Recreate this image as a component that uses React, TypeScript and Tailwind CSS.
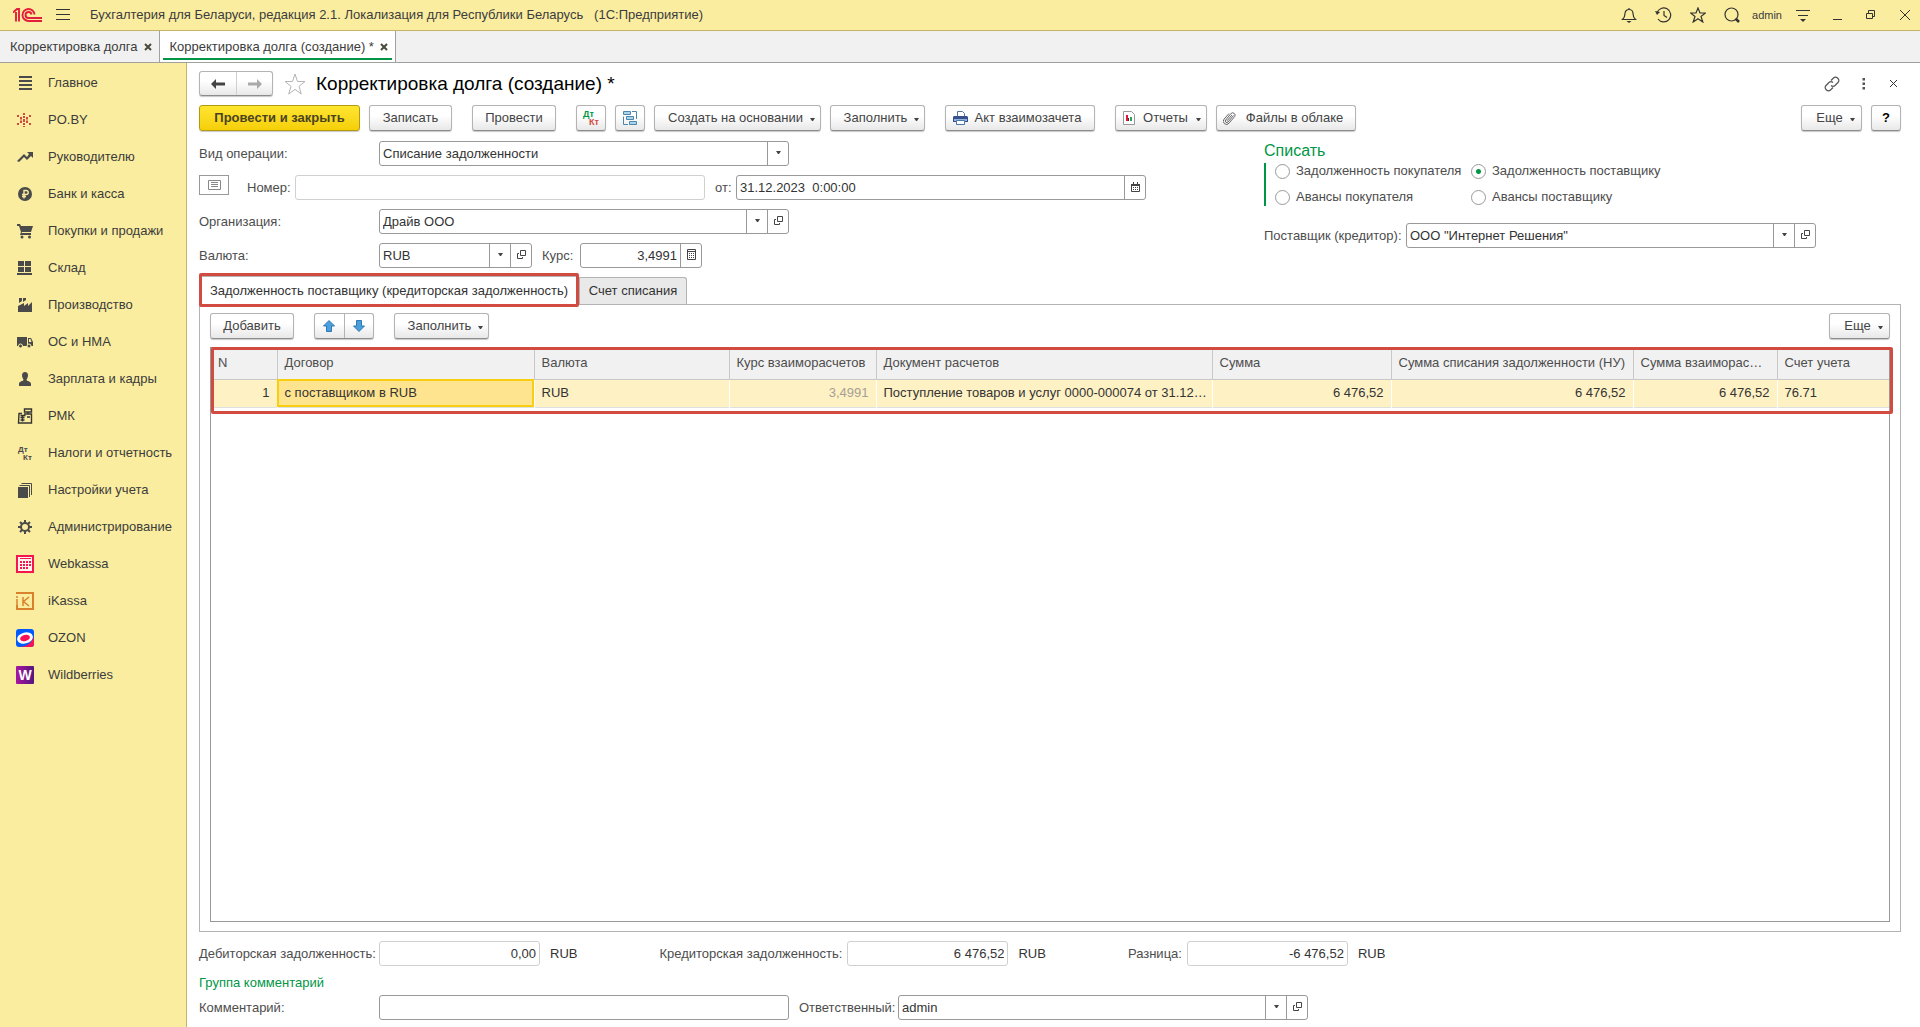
import { useState, type ReactNode } from "react";

type MenuItem = {
  title: string;
  icon: ReactNode;
};

type Column = {
  title: string;
  value: string;
  width: string;
  right?: boolean;
};

const menu: MenuItem[] = [
  {
    title: "Главное",
    icon: <path d="M2 1h13v2H2zM2 5h13v2H2zM2 9h13v2H2zM2 13h13v2H2z" />,
  },
  {
    title: "PO.BY",
    icon: (
      <path
        fill="#cf4a3f"
        d="M6 1h2v2H6zM6 4h2v2H6zM6 7h2v3H6zM6 11h2v2H6zM6 14h2v1H6zM3 5h2v2H3zM9 5h2v2H9zM3 9h2v2H3zM9 9h2v2H9zM0 3h2v2H0zM0 11h2v2H0zM12 3h2v2h-2zM12 11h2v2h-2zM3 7.500h2v1H3zM9 7.500h2v1H9z"
      />
    ),
  },
  {
    title: "Руководителю",
    icon: <path d="M10 3h6v6l-2-2-4 4-3-3-5 5-2-1 7-7 3 3 2-3z" />,
  },
  {
    title: "Банк и касса",
    icon: (
      <>
        <circle cx="8" cy="8" r="7" />
        <path fill="none" stroke="#faed9f" strokeWidth="1.400" d="M7 12.500V4.500h2.200a2 2 0 0 1 0 4H5M5 10.500h4" />
      </>
    ),
  },
  {
    title: "Покупки и продажи",
    icon: (
      <>
        <path d="M0 1h3l1 2h12l-2 6H5l-.5 1H14v2H3l1-3-2-6H0z" />
        <circle cx="5" cy="14" r="1.500" />
        <circle cx="12.500" cy="14" r="1.500" />
      </>
    ),
  },
  {
    title: "Склад",
    icon: <path d="M1 1h6v5H1zM8 1h6v5H8zM1 7h6v5H1zM8 7h6v5H8zM0 13h15v2H0z" />,
  },
  {
    title: "Производство",
    icon: <path d="M1 15V9l6-3v3l4-3v3l4-4v10zM2 1h3v3L2 6zM6 1h3v2L6 5z" />,
  },
  {
    title: "ОС и НМА",
    icon: (
      <>
        <path d="M0 3h10v9H0zM11 4h3l2 4v4h-5z" />
        <path fill="#faed9f" d="M12 5h1.500l1 3H12z" />
        <g stroke="#faed9f">
          <circle cx="3.500" cy="12" r="2" />
          <circle cx="12" cy="12" r="2" />
        </g>
      </>
    ),
  },
  {
    title: "Зарплата и кадры",
    icon: <path d="M8 1c2 0 3 1.500 3 3.500S9.500 8.500 9.500 9c0 1 4.500 1 4.500 4v2H2v-2c0-3 4.500-3 4.500-4 0-.5-1.500-2.500-1.500-4.500S6 1 8 1z" />,
  },
  {
    title: "РМК",
    icon: (
      <g fill="none" stroke="#333" strokeWidth="1.400">
        <path d="M7.500 1h7v3h-7zM11 4v2M5 5.500H2L1.500 15h13V6H7" />
        <path d="M3.500 7.500h5M3.500 9.500h4M3.500 12h4M5.500 7.500v6M10 9h3" />
      </g>
    ),
  },
  {
    title: "Налоги и отчетность",
    icon: (
      <g fontFamily="Liberation Sans, sans-serif" fontWeight="700" fontSize="8">
        <text x="1" y="7">Дт</text>
        <text x="6" y="15">Кт</text>
      </g>
    ),
  },
  {
    title: "Настройки учета",
    icon: (
      <>
        <path d="M1 5h10v11H1z" />
        <path fill="none" stroke="#4a4a4a" d="M2.500 3.500h10V15M4.500 1.500h10V13" />
      </>
    ),
  },
  {
    title: "Администрирование",
    icon: (
      <>
        <circle cx="8" cy="8" r="4" fill="none" stroke="#4a4a4a" strokeWidth="2" />
        <path
          stroke="#4a4a4a"
          strokeWidth="2"
          d="M8 1v3M8 12v3M1 8h3M12 8h3M3 3l2 2M11 11l2 2M13 3l-2 2M5 11l-2 2"
        />
      </>
    ),
  },
  {
    title: "Webkassa",
    icon: (
      <>
        <path fill="#fff4ee" stroke="#f5174b" strokeWidth="2" d="M0 0h16v16H0z" />
        <path
          fill="#f5174b"
          d="M3 2h11v1H3zM3 5h2v2H3zM6 5h2v2H6zM9 5h2v2H9zM12 5h2v2h-2zM3 8h2v2H3zM6 8h2v2H6zM9 8h2v2H9zM12 8h2v2h-2zM3 11h2v2H3zM6 11h2v2H6zM9 11h2v2H9z"
        />
      </>
    ),
  },
  {
    title: "iKassa",
    icon: (
      <g fill="none" stroke="#d9822b" strokeWidth="1.500">
        <path d="M0 1V0h16v16H0v-4" strokeWidth="2" />
        <path d="M0 3v2M0 6v6M6 4v9M12 4l-5.500 4.500L12 13" />
      </g>
    ),
  },
  {
    title: "OZON",
    icon: (
      <>
        <rect x="-1" y="-1" width="18" height="18" rx="3" fill="#005bff" />
        <path fill="#f91155" d="M17 7v7a3 3 0 0 1-3 3H2c6 0 12-3 15-10z" />
        <ellipse cx="8" cy="8" rx="8" ry="5.500" fill="#fff" transform="rotate(-14 8 8)" />
        <ellipse cx="8" cy="8" rx="5" ry="3" fill="#f91155" transform="rotate(-14 8 8)" />
      </>
    ),
  },
  {
    title: "Wildberries",
    icon: (
      <>
        <linearGradient id="wb" x1="0" y1="0" x2="1" y2="0">
          <stop offset="0" stopColor="#a915a0" />
          <stop offset="1" stopColor="#54167f" />
        </linearGradient>
        <rect x="-1" y="-1" width="18" height="18" rx="1" fill="url(#wb)" />
        <text x="8" y="13" textAnchor="middle" fill="#fff" fontFamily="Liberation Sans, sans-serif" fontWeight="700" fontSize="14">
          W
        </text>
      </>
    ),
  },
];

const columns: Column[] = [
  { title: "N", value: "1", width: "w-[66px]", right: true },
  { title: "Договор", value: "с поставщиком в RUB", width: "w-[257px]" },
  { title: "Валюта", value: "RUB", width: "w-[195px]" },
  { title: "Курс взаиморасчетов", value: "3,4991", width: "w-[147px]", right: true },
  { title: "Документ расчетов", value: "Поступление товаров и услуг 0000-000074 от 31.12…", width: "w-[336px]" },
  { title: "Сумма", value: "6 476,52", width: "w-[179px]", right: true },
  { title: "Сумма списания задолженности (НУ)", value: "6 476,52", width: "w-[242px]", right: true },
  { title: "Сумма взаиморас…", value: "6 476,52", width: "w-[144px]", right: true },
  { title: "Счет учета", value: "76.71", width: "" },
];

const debtKinds = [
  "Задолженность покупателя",
  "Задолженность поставщику",
  "Авансы покупателя",
  "Авансы поставщику",
];

const btn =
  "flex h-[26px] shrink-0 items-center justify-center rounded-[3px] border border-[#b3b3b3] border-b-[#8c8c8c] bg-linear-to-b from-white from-40% to-[#e8e8e8] whitespace-nowrap text-[#444] shadow-[0_1px_1px_#c8c8c8]";
const field = "flex h-[25px] rounded-[3px] border border-[#999] bg-white";
const control = "min-w-0 flex-1 bg-transparent px-[3px] text-[#333] outline-none";

function Caret() {
  return (
    <svg width="5" height="3" viewBox="0 0 5 3" fill="#444" className="mt-0.5" aria-hidden="true">
      <path d="M0 0h5L3 3H2z" />
    </svg>
  );
}

function FieldButton({ kind }: { kind: "list" | "open" | "date" | "calc" }) {
  const labels = { list: "Выбрать", open: "Открыть", date: "Календарь", calc: "Калькулятор" };
  return (
    <button type="button" aria-label={labels[kind]} className="flex w-[21px] shrink-0 items-center justify-center border-l border-[#999] pb-0.5">
      {kind === "list" && (
        <svg width="5" height="3" viewBox="0 0 5 3" fill="#444">
          <path d="M0 0h5L3 3H2z" />
        </svg>
      )}
      {kind === "open" && (
        <svg width="9" height="9" viewBox="0 0 9 9" fill="none" stroke="#444">
          <path d="M3.500.5h5v5h-5zM2 3.500H.5v5h5V7" />
        </svg>
      )}
      {kind === "date" && (
        <svg width="9" height="10" viewBox="0 0 9 10" fill="none" stroke="#444">
          <path d="M.5 2.500h8v7h-8zM0 2.500h9M2.500 0v2M6.500 0v2" />
          <path d="M0 3.500h9" />
          <path strokeDasharray="1 1" d="M2 5.500h5M2 7.500h5" />
        </svg>
      )}
      {kind === "calc" && (
        <svg width="9" height="11" viewBox="0 0 9 11" fill="none" stroke="#444">
          <path d="M.5.5h8v10h-8zM1 2.500h7" />
          <path strokeDasharray="1 1" d="M2 4.500h5M2 6.500h5M2 8.500h5" />
        </svg>
      )}
    </button>
  );
}

function Total({ id, label, value, labelWidth }: { id: string; label: string; value: string; labelWidth: string }) {
  return (
    <div className="flex items-center">
      <label htmlFor={id} className={labelWidth}>{label}</label>
      <div className="flex h-[25px] w-[161px] rounded-[3px] border border-[#d0d0d0]">
        <input id={id} readOnly className={control + " text-right"} defaultValue={value} />
      </div>
      <span className="ml-[10px] text-[#333]">RUB</span>
    </div>
  );
}

function TopBar() {
  return (
    <header className="flex h-[31px] items-center border-b border-[#c5b565] bg-[#faed9f] pr-2.5 pl-[13px] text-[#3c3c3c]">
      <svg width="29" height="14" viewBox="0 0 29 14" fill="none" stroke="#e31e3c" strokeWidth="1.900" aria-label="1С">
        <path d="M0 4.500 4 1h2v12.500M3 4v9.500" />
        <path d="M21.500 6.500A6 6 0 1 0 15.500 13H29" />
        <path d="M18.500 6.500A3 3 0 1 0 15.500 10H29" />
      </svg>
      <button type="button" aria-label="Меню" className="ml-3.5">
        <svg width="14" height="12" viewBox="0 0 14 12" stroke="#333">
          <path d="M0 .5h14M0 5.500h14M0 10.500h14" />
        </svg>
      </button>
      <h1 className="ml-5 whitespace-pre">
        Бухгалтерия для Беларуси, редакция 2.1. Локализация для Республики Беларусь   (1С:Предприятие)
      </h1>
      <div className="ml-auto flex items-center">
        <button type="button" aria-label="Уведомления" className="mr-[18px]">
          <svg width="16" height="16" viewBox="0 0 16 16" fill="none" stroke="#333" strokeWidth="1.200">
            <path d="M1.500 12.500c2-2 2.500-3 2.500-6 0-2 1.500-4 4-4s4 2 4 4c0 3 .5 4 2.500 6zM8 1v1.500" />
            <path fill="#333" stroke="none" d="M5.500 14h5L8 16z" />
          </svg>
        </button>
        <button type="button" aria-label="История" className="mr-[18px]">
          <svg width="17" height="16" viewBox="0 0 17 16" fill="none" stroke="#333" strokeWidth="1.200">
            <path d="M2 6a7 7 0 1 1 1 6M9 4v4.500l3 2" />
            <path fill="#333" stroke="none" d="m0 4 5 1-3 3z" />
          </svg>
        </button>
        <button type="button" aria-label="Избранное" className="mr-[18px]">
          <svg width="16" height="16" viewBox="0 0 16 16" fill="none" stroke="#333" strokeWidth="1.200">
            <path d="m8 1 2 5h5.500L11 9.500l1.800 5.500L8 11.800 3.200 15 5 9.500.5 6H6z" />
          </svg>
        </button>
        <button type="button" aria-label="Поиск" className="mr-3">
          <svg width="16" height="16" viewBox="0 0 16 16" fill="none" stroke="#333" strokeWidth="1.200">
            <circle cx="7.500" cy="7.500" r="6.500" />
            <path strokeWidth="2.500" d="m11.500 11.500 3.500 3.500" />
          </svg>
        </button>
        <span className="text-[11px]">admin</span>
        <button type="button" aria-label="Настройки" className="mr-[23px] ml-3.5">
          <svg width="14" height="14" viewBox="0 0 14 14" stroke="#333">
            <path d="M0 2.500h14M2 7.500h10" />
            <path fill="#333" stroke="none" d="M4 11h6l-3 3z" />
          </svg>
        </button>
        <button type="button" aria-label="Свернуть" className="mr-6">
          <svg width="9" height="10" viewBox="0 0 9 10" stroke="#333">
            <path d="M0 9.500h9" />
          </svg>
        </button>
        <button type="button" aria-label="Развернуть" className="mr-6">
          <svg width="10" height="10" viewBox="0 0 10 10" fill="none" stroke="#333">
            <path d="M.5 3.500h6v5h-6zM2.500 3V.5h6v6H7" />
          </svg>
        </button>
        <button type="button" aria-label="Закрыть">
          <svg width="10" height="10" viewBox="0 0 10 10" stroke="#333">
            <path d="m0 0 10 10M10 0 0 10" />
          </svg>
        </button>
      </div>
    </header>
  );
}

function CloseMark() {
  return (
    <svg width="8" height="8" viewBox="0 0 8 8" stroke="#4a4a3c" strokeWidth="2" aria-label="Закрыть">
      <path d="m1 1 6 6M7 1 1 7" />
    </svg>
  );
}

export default function App() {
  const [kind, setKind] = useState("Задолженность поставщику");

  return (
    <div className="flex min-h-screen flex-col bg-white font-['Liberation_Sans',Arial,sans-serif] text-[13px] leading-4 text-[#4d4d4d]">
      <TopBar />

      {/* open windows */}
      <nav className="flex h-8 border-b border-[#a0a0a0] bg-[#f1f1f1] text-[#3c3c3c]">
        <a href="#list" className="flex items-center gap-1.5 border-r border-[#a0a0a0] pr-[7px] pl-2.5">
          Корректировка долга
          <CloseMark />
        </a>
        <a href="#new" className="flex items-stretch border-r border-[#a0a0a0] bg-white px-[3px] pb-0.5">
          <span className="flex items-center gap-1.5 border-b-2 border-[#009646] pt-1 pr-1 pl-[7px]">
            Корректировка долга (создание) *
            <CloseMark />
          </span>
        </a>
      </nav>

      <div className="flex flex-1">
        <aside className="w-[187px] shrink-0 border-r border-[#c5b565] bg-[#faed9f] pt-px">
          {menu.map((item) => (
            <a key={item.title} href="#" className="flex h-[37px] items-center gap-3.5 pl-4 whitespace-nowrap text-[#3c3c3c]">
              <svg width="18" height="18" viewBox="-1 -1 18 18" fill="#4a4a4a" className="shrink-0" aria-hidden="true">
                {item.icon}
              </svg>
              {item.title}
            </a>
          ))}
        </aside>

        <main className="flex min-w-0 flex-1 flex-col pt-2 pr-[19px] pb-[7px] pl-3">
          <div className="flex h-[25px] items-center">
            <div className="flex h-[25px] rounded-[3px] border border-[#b3b3b3] border-b-[#8c8c8c] bg-linear-to-b from-white from-40% to-[#e8e8e8] shadow-[0_1px_1px_#c8c8c8]">
              <button type="button" aria-label="Назад" className="flex w-9 items-center justify-center">
                <svg width="14" height="10" viewBox="0 0 14 10" fill="#444">
                  <path d="m0 5 5-5v3.500h9v3H5V10z" />
                </svg>
              </button>
              <button type="button" aria-label="Вперед" className="flex w-9 items-center justify-center border-l border-[#d0d0d0]">
                <svg width="14" height="10" viewBox="0 0 14 10" fill="#aaa">
                  <path d="m14 5-5-5v3.500H0v3h9V10z" />
                </svg>
              </button>
            </div>
            <button type="button" aria-label="В избранное" className="ml-[11px]">
              <svg width="22" height="22" viewBox="0 0 22 22" fill="none" stroke="#b5b5b5">
                <path d="m11 1 2.500 7.500H21l-6 4.800 2.300 7.700L11 16.400 4.700 21 7 13.300 1 8.500h7.500z" />
              </svg>
            </button>
            <h2 className="ml-[10px] text-[19px] leading-6 text-black">Корректировка долга (создание) *</h2>
            <div className="mr-1 ml-auto flex items-center gap-5">
              <button type="button" aria-label="Ссылка">
                <svg width="16" height="16" viewBox="0 0 16 16" fill="none" stroke="#555" strokeWidth="1.200">
                  <path d="M7 4.500 9.500 2a2.800 2.800 0 0 1 4 0l.5.500a2.800 2.800 0 0 1 0 4L11 9.500a2.800 2.800 0 0 1-4 0" />
                  <path d="M9 11.500 6.500 14a2.800 2.800 0 0 1-4 0L2 13.500a2.800 2.800 0 0 1 0-4L5 6.500a2.800 2.800 0 0 1 4 0" />
                </svg>
              </button>
              <button type="button" aria-label="Действия" className="mx-0.5">
                <svg width="4" height="12" viewBox="0 0 4 12" fill="#555">
                  <path d="M.5 0h2.500v2.500H.5zM.5 4.500h2.500V7H.5zM.5 9h2.500v2.500H.5z" />
                </svg>
              </button>
              <button type="button" aria-label="Закрыть форму" className="ml-0.5">
                <svg width="7" height="7" viewBox="0 0 7 7" stroke="#333">
                  <path d="m0 0 7 7M7 0 0 7" />
                </svg>
              </button>
            </div>
          </div>

          {/* form commands */}
          <div className="mt-[9px] flex">
            <button type="button" className="flex h-[26px] w-[161px] items-center justify-center rounded-[3px] border border-[#b39b10] bg-linear-to-b from-[#ffe62e] to-[#f5cf05] font-bold text-[#4a4320] shadow-[0_1px_1px_#c8c8c8]">
              Провести и закрыть
            </button>
            <button type="button" className={btn + " ml-[9px] w-[83px]"}>Записать</button>
            <button type="button" className={btn + " ml-5 w-[84px]"}>Провести</button>
            <button type="button" aria-label="Дт Кт" className={btn + " ml-5 w-[30px]"}>
              <svg width="18" height="18" viewBox="0 0 18 18" fontFamily="Liberation Sans, sans-serif" fontWeight="700" fontSize="9">
                <text x="1" y="8" fill="#009646">Дт</text>
                <text x="7" y="16" fill="#d24b40">Кт</text>
              </svg>
            </button>
            <button type="button" aria-label="Структура подчиненности" className={btn + " ml-[9px] w-[30px]"}>
              <svg width="14" height="14" viewBox="0 0 14 14" fill="#a9d4ec" stroke="#4d86ad">
                <path d="M.5.5h7v3h-7zM3.500 5.500h7v3h-7zM6.500 10.500h7v3h-7z" />
                <path fill="none" d="M9 .5h4.500V8M.5 5.500v8H5" />
              </svg>
            </button>
            <button type="button" className={btn + " ml-[9px] w-[167px] gap-[7px] pl-2"}>
              Создать на основании <Caret />
            </button>
            <button type="button" className={btn + " ml-[9px] w-[95px] gap-[7px] pl-2"}>
              Заполнить <Caret />
            </button>
            <button type="button" className={btn + " ml-5 w-[150px] gap-[7px] pr-1.5"}>
              <svg width="15" height="14" viewBox="0 0 15 14">
                <path fill="#fff" stroke="#4a78a8" d="M4.500 5V.5h5l2 2V5" />
                <path fill="#39508f" d="M1 5h13l1 1v5H0V6z" />
                <path fill="#8fb4dc" d="M1 8h13v2H1z" />
                <path fill="#fff" stroke="#4a78a8" d="M3.500 9.500h8v4h-8z" />
              </svg>
              Акт взаимозачета
            </button>
            <button type="button" className={btn + " ml-5 w-[92px] gap-2 pl-0.5"}>
              <svg width="12" height="14" viewBox="0 0 12 14">
                <path fill="#fff" stroke="#999" d="M.5.5h8l3 3v10H.5z" />
                <path fill="#e3173e" d="M3 4h2v6H3z" />
                <path fill="#333" d="M5 7h1v3H5z" />
                <path fill="#2e9e4f" d="M7 6h2v4H7z" />
              </svg>
              Отчеты <Caret />
            </button>
            <button type="button" className={btn + " ml-[9px] w-[140px] gap-2.5 pr-1.5"}>
              <svg width="13" height="14" viewBox="0 0 13 14" fill="none" stroke="#666">
                <path d="M10.500 4.500 5 11a1.500 1.500 0 0 1-2.300-2L8 2.500a2.400 2.400 0 0 1 3.700 3L6 12.200a3.200 3.200 0 0 1-5-4L6 2.500M9 4 4 9.800" />
              </svg>
              Файлы в облаке
            </button>
            <button type="button" className={btn + " ml-auto w-[61px] gap-[7px] pl-2"}>
              Еще <Caret />
            </button>
            <button type="button" className={btn + " ml-[9px] w-[30px] font-bold text-black"}>?</button>
          </div>

          {/* document header */}
          <div className="mt-[10px] flex">
            <div className="flex w-[1065px] shrink-0 flex-col gap-[9px]">
              <div className="flex items-center">
                <label htmlFor="operation" className="w-[180px]">Вид операции:</label>
                <div className={field + " w-[410px]"}>
                  <select id="operation" className={control + " appearance-none"}>
                    <option>Списание задолженности</option>
                  </select>
                  <FieldButton kind="list" />
                </div>
              </div>
              <div className="flex h-[25px] items-center">
                <button type="button" aria-label="Изменить номер" className="flex h-5 w-[30px] items-center justify-center self-start border border-[#999]">
                  <svg width="13" height="10" viewBox="0 0 13 10" fill="none" stroke="#888">
                    <path d="M.5.5h12v9H.5zM3 2.500h7M3 4.500h7M3 6.500h7" />
                  </svg>
                </button>
                <label htmlFor="number" className="ml-[18px] w-12">Номер:</label>
                <div className="flex h-[25px] w-[410px] rounded-[3px] border border-[#d0d0d0]">
                  <input id="number" className={control} />
                </div>
                <label htmlFor="date" className="ml-[10px] w-[21px]">от:</label>
                <div className={field + " w-[410px]"}>
                  <input id="date" className={control} defaultValue="31.12.2023  0:00:00" />
                  <FieldButton kind="date" />
                </div>
              </div>
              <div className="flex items-center">
                <label htmlFor="org" className="w-[180px]">Организация:</label>
                <div className={field + " w-[410px]"}>
                  <input id="org" className={control} defaultValue="Драйв ООО" />
                  <FieldButton kind="list" />
                  <FieldButton kind="open" />
                </div>
              </div>
              <div className="flex items-center">
                <label htmlFor="currency" className="w-[180px]">Валюта:</label>
                <div className={field + " w-[153px]"}>
                  <input id="currency" className={control} defaultValue="RUB" />
                  <FieldButton kind="list" />
                  <FieldButton kind="open" />
                </div>
                <label htmlFor="rate" className="ml-[10px] w-[38px]">Курс:</label>
                <div className={field + " w-[122px]"}>
                  <input id="rate" className={control + " text-right"} defaultValue="3,4991" />
                  <FieldButton kind="calc" />
                </div>
              </div>
            </div>

            <div>
              <fieldset>
                <legend className="text-base leading-5 text-[#009646]">Списать</legend>
                <div className="mt-0.5 grid grid-cols-[196px_auto] gap-y-[10px] border-l-2 border-[#009646] pb-px pl-[9px]">
                  {debtKinds.map((name) => (
                    <label key={name} className="flex items-center gap-1.5 whitespace-nowrap">
                      <input
                        type="radio"
                        name="debt"
                        checked={kind === name}
                        onChange={() => setKind(name)}
                        className="size-[15px] appearance-none rounded-full border border-[#999] bg-white checked:bg-[radial-gradient(circle,#009646_2px,white_3px)]"
                      />
                      {name}
                    </label>
                  ))}
                </div>
              </fieldset>
              <div className="mt-[17px] flex items-center">
                <label htmlFor="supplier" className="w-[142px] whitespace-nowrap">Поставщик (кредитор):</label>
                <div className={field + " w-[410px]"}>
                  <input id="supplier" className={control} defaultValue={'ООО "Интернет Решения"'} />
                  <FieldButton kind="list" />
                  <FieldButton kind="open" />
                </div>
              </div>
            </div>
          </div>

          {/* tabs */}
          <div className="mt-2 flex items-end text-[#333]">
            <button type="button" className="relative z-10 -mb-px h-[29px] w-[380px] border border-b-0 border-[#b3b3b3] bg-white">
              Задолженность поставщику (кредиторская задолженность)
              <span className="absolute -inset-x-px -top-1 -bottom-0.5 rounded-xs border-3 border-[#d24b40]" />
            </button>
            <button type="button" className="h-[27px] w-[108px] rounded-tr-[3px] border border-b-0 border-[#b3b3b3] bg-[#e9e9e9]">
              Счет списания
            </button>
          </div>

          <section className="flex flex-1 flex-col border border-[#b3b3b3] px-[10px] pt-2 pb-[9px]">
            <div className="flex">
              <button type="button" className={btn + " w-[84px]"}>Добавить</button>
              <div className={btn + " ml-5 w-[60px]"}>
                <button type="button" aria-label="Вверх" className="flex h-full flex-1 items-center justify-center">
                  <svg width="12" height="12" viewBox="0 0 12 12" fill="#4a9fdc" stroke="#2f78b0">
                    <path d="m6 .5 5.500 5.500H8.500v5.500h-5V6H.5z" />
                  </svg>
                </button>
                <button type="button" aria-label="Вниз" className="flex h-full flex-1 items-center justify-center border-l border-[#b3b3b3]">
                  <svg width="12" height="12" viewBox="0 0 12 12" fill="#4a9fdc" stroke="#2f78b0">
                    <path d="M6 11.500.5 6h3V.5h5V6h3z" />
                  </svg>
                </button>
              </div>
              <button type="button" className={btn + " ml-5 w-[95px] gap-[7px] pl-2"}>
                Заполнить <Caret />
              </button>
              <button type="button" className={btn + " ml-auto w-[61px] gap-[7px] pl-2"}>
                Еще <Caret />
              </button>
            </div>

            <div className="relative mt-2 flex-1 border border-[#999]">
              <table className="w-full table-fixed border-collapse">
                <thead>
                  <tr className="h-[31px] bg-[#f1f1f1]">
                    {columns.map((col) => (
                      <th
                        key={col.title}
                        className={"border-r border-b border-[#c8c8c8] px-[7px] text-left font-normal whitespace-nowrap last:border-r-0 " + col.width}
                      >
                        {col.title}
                      </th>
                    ))}
                  </tr>
                </thead>
                <tbody>
                  <tr className="h-[28px] border-b border-[#e0e0e0] bg-[#fef1c4] text-[#333]">
                    {columns.map((col, i) => (
                      <td
                        key={col.title}
                        className={
                          "border-r border-white px-[7px] whitespace-nowrap last:border-r-0" +
                          (col.right ? " text-right" : "") +
                          (i === 1 ? " bg-[#ffe48f] outline-2 -outline-offset-2 outline-[#f8cf10]" : "") +
                          (i === 3 ? " text-[#a5a094]" : "")
                        }
                      >
                        {col.value}
                      </td>
                    ))}
                  </tr>
                </tbody>
              </table>
              <div className="pointer-events-none absolute -top-px -right-1 left-0 h-[67px] rounded-xs border-3 border-[#d24b40]" />
            </div>
          </section>

          <div className="mt-[9px] flex">
            <Total id="debit" label="Дебиторская задолженность:" value="0,00" labelWidth="w-[180px]" />
            <div className="ml-[82px]">
              <Total id="credit" label="Кредиторская задолженность:" value="6 476,52" labelWidth="w-[188px]" />
            </div>
            <div className="ml-[82px]">
              <Total id="diff" label="Разница:" value="-6 476,52" labelWidth="w-[59px]" />
            </div>
          </div>

          <h3 className="mt-[9px] text-[#009646]">Группа комментарий</h3>
          <div className="mt-1 flex items-center">
            <label htmlFor="comment" className="w-[180px]">Комментарий:</label>
            <div className={field + " w-[410px]"}>
              <input id="comment" className={control} />
            </div>
            <label htmlFor="owner" className="ml-[10px] w-[99px]">Ответственный:</label>
            <div className={field + " w-[410px]"}>
              <input id="owner" className={control} defaultValue="admin" />
              <FieldButton kind="list" />
              <FieldButton kind="open" />
            </div>
          </div>
        </main>
      </div>
    </div>
  );
}
